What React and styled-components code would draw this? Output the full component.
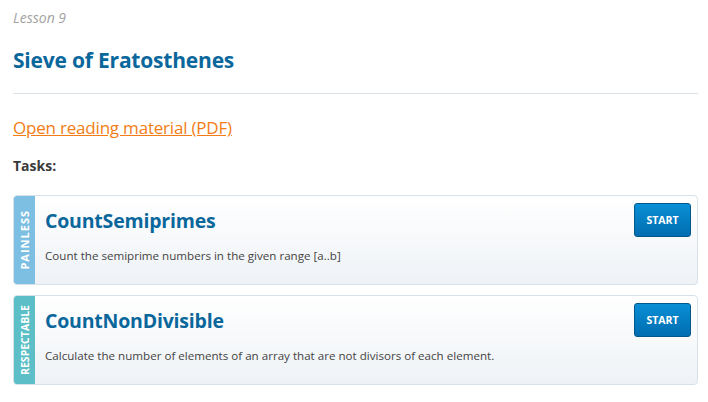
import React from "react";
import styled, { createGlobalStyle } from "styled-components";

const GlobalStyle = createGlobalStyle`
  html, body {
    margin: 0;
    padding: 0;
    background: #fff;
  }
  body {
    font-family: "Open Sans", "DejaVu Sans", sans-serif;
    color: #333;
  }
`;

const Page = styled.div`
  width: 685px;
  padding: 8px 0 0 13px;
`;

const Lesson = styled.div`
  font-size: 14px;
  font-style: italic;
  color: #a3a3a3;
  line-height: 20px;
`;

const Title = styled.h1`
  margin: 19px 0 0;
  font-size: 21px;
  line-height: 26px;
  font-weight: 700;
  color: #0a679c;
  letter-spacing: -0.2px;
`;

const Rule = styled.hr`
  margin: 20px 0 0;
  border: 0;
  border-top: 1px solid #dbe3ea;
`;

const Link = styled.a`
  display: inline-block;
  margin-top: 23px;
  font-size: 17px;
  line-height: 22px;
  color: #f27d16;
  text-decoration: underline;
  letter-spacing: -0.2px;
`;

const Tasks = styled.div`
  margin-top: 18px;
  font-size: 14px;
  font-weight: 700;
  line-height: 18px;
  color: #3a3a3a;
`;

const TaskList = styled.div`
  margin-top: 20px;
  display: flex;
  flex-direction: column;
  gap: 10px;
`;

const Card = styled.div`
  display: flex;
  height: 88px;
  border: 1px solid #d8e2ea;
  border-radius: 4px;
  overflow: hidden;
  background: linear-gradient(to bottom, #ffffff, #eef2f6);
`;

const Strip = styled.div`
  width: 21px;
  flex: none;
  background: ${(p) => p.color};
  display: flex;
  align-items: center;
  justify-content: center;
`;

const StripText = styled.span`
  writing-mode: vertical-rl;
  transform: rotate(180deg);
  color: #fff;
  font-weight: 700;
  font-size: ${(p) => p.size}px;
  letter-spacing: ${(p) => p.spacing}px;
  white-space: nowrap;
`;

const Body = styled.div`
  flex: 1;
  padding: 12px 0 0 10px;
`;

const TaskName = styled.h2`
  margin: 0;
  font-size: 19.5px;
  line-height: 26px;
  font-weight: 700;
  color: #0a679c;
  letter-spacing: -0.2px;
`;

const Desc = styled.p`
  margin: 14px 0 0;
  font-size: 11.6px;
  line-height: 16px;
  color: #444;
`;

const Start = styled.button`
  flex: none;
  align-self: flex-start;
  margin: 7px 6px 0 0;
  width: 57px;
  height: 34px;
  border: 1px solid #00578c;
  border-radius: 3px;
  background: linear-gradient(to bottom, #0a8fd6, #006db0);
  color: #fff;
  font-family: "Open Sans", "DejaVu Sans", sans-serif;
  font-size: 10.5px;
  font-weight: 700;
  cursor: pointer;
`;

const tasks = [
  {
    level: "PAINLESS",
    color: "#7dbfe2",
    size: 11,
    spacing: 1,
    name: "CountSemiprimes",
    desc: "Count the semiprime numbers in the given range [a..b]",
  },
  {
    level: "RESPECTABLE",
    color: "#5cbfc7",
    size: 10.5,
    spacing: 0,
    name: "CountNonDivisible",
    desc: "Calculate the number of elements of an array that are not divisors of each element.",
  },
];

export default function App() {
  return (
    <Page>
      <GlobalStyle />
      <Lesson>Lesson 9</Lesson>
      <Title>Sieve of Eratosthenes</Title>
      <Rule />
      <Link href="#">Open reading material (PDF)</Link>
      <Tasks>Tasks:</Tasks>
      <TaskList>
        {tasks.map((t) => (
          <Card key={t.name}>
            <Strip color={t.color}>
              <StripText size={t.size} spacing={t.spacing}>
                {t.level}
              </StripText>
            </Strip>
            <Body>
              <TaskName>{t.name}</TaskName>
              <Desc>{t.desc}</Desc>
            </Body>
            <Start>START</Start>
          </Card>
        ))}
      </TaskList>
    </Page>
  );
}
